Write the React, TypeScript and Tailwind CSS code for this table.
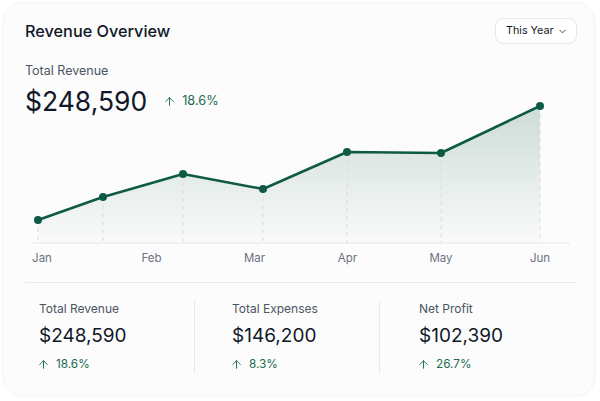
import React from "react";
import { ArrowUp, ChevronDown } from "lucide-react";

const pts: [number, number][] = [
  [13, 125],
  [78, 102],
  [158, 79],
  [238, 94],
  [322, 57],
  [416, 58],
  [515, 11],
];

const labels: [string, number][] = [
  ["Jan", 17],
  ["Feb", 126.5],
  ["Mar", 229.5],
  ["Apr", 322.5],
  ["May", 416],
  ["Jun", 515],
];

function Chart() {
  const line = pts.map((p, i) => `${i === 0 ? "M" : "L"}${p[0]} ${p[1]}`).join(" ");
  const area = `${line} L${pts[pts.length - 1][0]} 148 L${pts[0][0]} 148 Z`;
  return (
    <svg width="552" height="175" viewBox="0 0 552 175" className="block overflow-visible">
      <defs>
        <linearGradient id="fillG" x1="0" y1="0" x2="0" y2="1">
          <stop offset="0%" stopColor="#0f5c45" stopOpacity="0.2" />
          <stop offset="100%" stopColor="#0f5c45" stopOpacity="0.01" />
        </linearGradient>
      </defs>
      <path d={area} fill="url(#fillG)" />
      {pts.map((p, i) => (
        <line key={i} x1={p[0]} y1={p[1]} x2={p[0]} y2={148} stroke="#d9dcdf" strokeWidth="1" strokeDasharray="4 4" />
      ))}
      <line x1="7" y1="148" x2="545" y2="148" stroke="#e5e7eb" strokeWidth="1" />
      <path d={line} fill="none" stroke="#0f5a44" strokeWidth="2.5" strokeLinejoin="round" strokeLinecap="round" />
      {pts.map((p, i) => (
        <circle key={i} cx={p[0]} cy={p[1]} r="4" fill="#0f5a44" />
      ))}
      {labels.map(([t, x]) => (
        <text key={t} x={x} y="167" textAnchor="middle" fontSize="11.5" fill="#6b7280" fontFamily="Inter, sans-serif">
          {t}
        </text>
      ))}
    </svg>
  );
}

function Stat({ label, value, change, cls }: { label: string; value: string; change: string; cls: string }) {
  return (
    <div className={cls}>
      <div className="text-[12px] leading-[18px] text-[#4b5563]">{label}</div>
      <div className="mt-[5px] text-[19px] leading-[26px] text-[#111827]">{value}</div>
      <div className="mt-[6px] flex items-center gap-[6px] text-[11.75px] leading-[18px] text-[#1d6b4f]">
        <ArrowUp size={13} strokeWidth={1.75} className="-ml-[2px]" />
        <span>{change}</span>
      </div>
    </div>
  );
}

export default function App() {
  return (
    <div className="w-[600px] h-[401px] bg-white pt-[2px] pl-[3px]" style={{ fontFamily: "Inter, 'Noto Sans', sans-serif" }}>
      <div className="w-[592px] h-[394px] rounded-[20px] bg-[#fcfcfc] border border-[#f5f5f6] shadow-[0_1px_4px_rgba(0,0,0,0.03)] pl-[21px] pr-[17px] pt-[15px]">
        <div className="flex items-center justify-between h-[26px]">
          <div className="text-[16.25px] leading-[24px] font-medium text-[#111827]">Revenue Overview</div>
          <div className="flex items-center h-[26px] w-[82px] rounded-[8px] border border-[#e5e7eb] bg-white pl-[10px] pr-[8px] justify-between text-[10.75px] text-[#111827] whitespace-nowrap">
            <span>This Year</span>
            <ChevronDown size={11} strokeWidth={2} className="text-[#374151]" />
          </div>
        </div>
        <div className="mt-[18px] text-[12.5px] leading-[18px] text-[#4b5563]">Total Revenue</div>
        <div className="mt-[5px] flex items-center h-[32px]">
          <span className="text-[26.5px] leading-[32px] text-[#111827]">$248,590</span>
          <span className="ml-[16px] flex items-center gap-[6px] text-[12.75px] text-[#1d6b4f]">
            <ArrowUp size={13} strokeWidth={1.75} />
            <span>18.6%</span>
          </span>
        </div>
        <div className="-mt-[22px]">
          <Chart />
        </div>
        <div className="mt-[12px] border-t border-[#e8eaed] w-[552px] flex pt-[17px]">
          <Stat label="Total Revenue" value="$248,590" change="18.6%" cls="w-[169px] pl-[14px]" />
          <Stat label="Total Expenses" value="$146,200" change="8.3%" cls="w-[185px] pl-[37px] border-l border-[#e8eaed]" />
          <Stat label="Net Profit" value="$102,390" change="26.7%" cls="pl-[39px] border-l border-[#e8eaed]" />
        </div>
      </div>
    </div>
  );
}
